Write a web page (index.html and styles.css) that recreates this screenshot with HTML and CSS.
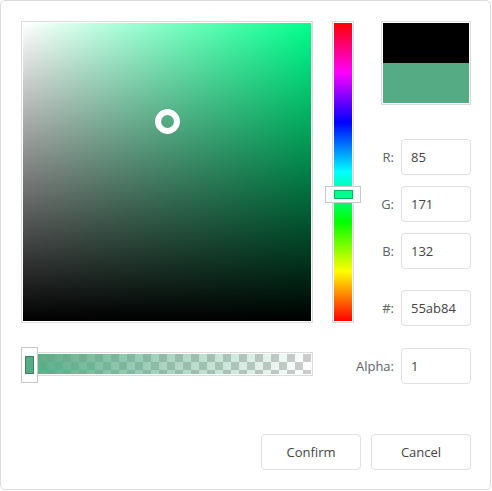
FILE: index.html
```html
<!DOCTYPE html>
<html>
<head>
<meta charset="utf-8">
<link rel="stylesheet" href="styles.css">
</head>
<body>
<div class="panel">
  <div class="top">
    <div class="sv">
      <div class="sv-inner">
        <div class="sv-white"></div>
        <div class="sv-black"></div>
        <div class="sv-cursor"></div>
      </div>
    </div>
    <div class="hue">
      <div class="hue-inner"></div>
      <div class="hue-handle"><div class="hue-thumb"></div></div>
    </div>
    <div class="side">
      <div class="preview">
        <div class="prev-old"></div>
        <div class="prev-new"></div>
      </div>
      <div class="field f-r"><label>R:</label><div class="input">85</div></div>
      <div class="field f-g"><label>G:</label><div class="input">171</div></div>
      <div class="field f-b"><label>B:</label><div class="input">132</div></div>
      <div class="field f-hex"><label>#:</label><div class="input">55ab84</div></div>
    </div>
  </div>
  <div class="alpha-row">
    <div class="alpha">
      <div class="alpha-track"><div class="alpha-fill"></div></div>
      <div class="alpha-handle"><div class="alpha-thumb"></div></div>
    </div>
    <div class="field f-alpha"><label>Alpha:</label><div class="input">1</div></div>
  </div>
  <div class="actions">
    <button class="btn">Confirm</button>
    <button class="btn">Cancel</button>
  </div>
</div>
</body>
</html>
```
FILE: styles.css
```css
* { box-sizing: border-box; }
html, body { margin: 0; padding: 0; background: #fff; }
body { font-family: "Open Sans", "Noto Sans", sans-serif; font-size: 13px; color: #555; }

.panel {
  width: 491px;
  height: 490px;
  border: 1px solid #dcdcdc;
  border-radius: 5px;
  padding: 20px 19px 19px 20px;
  background: #fff;
}

.top { display: flex; align-items: flex-start; height: 305px; }

.sv {
  flex: 0 0 292px;
  height: 302px;
  border: 1px solid #dcdcdc;
  padding: 1px;
}
.sv-inner {
  position: relative;
  width: 100%;
  height: 100%;
  background: #00ff8c;
}
.sv-white {
  position: absolute; inset: 0;
  background: linear-gradient(to right, #fff, rgba(255,255,255,0));
}
.sv-black {
  position: absolute; inset: 0;
  background: linear-gradient(to bottom, rgba(0,0,0,0), #000);
}
.sv-cursor {
  position: absolute;
  left: 132px;
  top: 86px;
  width: 25px;
  height: 25px;
  border: 6px solid #fff;
  border-radius: 50%;
  box-shadow: 0 0 1px rgba(0,0,0,0.3);
}

.hue {
  position: relative;
  flex: 0 0 22px;
  height: 302px;
  margin-left: 19px;
  border: 1px solid #dcdcdc;
  padding: 1px;
}
.hue-inner {
  width: 100%; height: 100%;
  background: linear-gradient(to bottom, #f00 0%, #f0f 16.66%, #00f 33.33%, #0ff 50%, #0f0 66.66%, #ff0 83.33%, #f00 100%);
}
.hue-handle {
  position: absolute;
  left: -8px;
  top: 164px;
  width: 36px;
  height: 17px;
  background: #fff;
  border: 1px solid #c8c8c8;
  padding: 3px 7px 3px 8px;
}
.hue-thumb {
  width: 100%; height: 100%;
  background: #00ff8c;
  border: 1px solid #00b862;
}

.side { flex: 0 0 90px; margin-left: 27px; display: flex; flex-direction: column; }
.preview {
  height: 84px;
  border: 1px solid #dcdcdc;
  padding: 1px;
  display: flex; flex-direction: column;
  margin-bottom: 34px;
}
.prev-old { flex: 1; background: #000; }
.prev-new { flex: 1; background: #55ab84; }

.field { display: flex; align-items: center; justify-content: flex-end; height: 36px; }
.field label { color: #606266; margin-right: 7px; }
.f-r, .f-g, .f-b { margin-bottom: 11px; }
.f-hex { margin-top: 10px; }
.f-alpha { margin-top: 1px; }
.input {
  width: 70px;
  height: 36px;
  border: 1px solid #dcdfe6;
  border-radius: 4px;
  padding: 0 9px;
  display: flex; align-items: center;
  color: #444;
}

.alpha-row { display: flex; align-items: flex-start; justify-content: space-between; margin-top: 21px; height: 37px; }
.alpha { position: relative; width: 292px; height: 36px; padding-top: 5px; }
.alpha-track {
  width: 100%;
  height: 24px;
  border: 1px solid #dcdcdc;
  padding: 1px;
}
.alpha-fill {
  width: 100%; height: 100%;
  background:
    linear-gradient(to right, #55ab84, rgba(85,171,132,0)),
    conic-gradient(#ccc 25%, #fff 0 50%, #ccc 0 75%, #fff 0) 0 0 / 16px 16px;
}
.alpha-handle {
  position: absolute;
  left: 0; top: 0;
  width: 17px;
  height: 36px;
  background: #fff;
  border: 1px solid #c8c8c8;
  padding: 8px 3px 8px 3px;
}
.alpha-thumb {
  width: 100%; height: 100%;
  background: #55ab84;
  border: 1px solid #3e8062;
}

.actions { display: flex; justify-content: flex-end; gap: 10px; margin-top: 50px; }
.btn {
  width: 100px; height: 36px;
  border: 1px solid #dcdfe6;
  border-radius: 4px;
  background: #fff;
  font-family: inherit;
  font-size: 13px;
  color: #444;
  padding: 0;
}
```
